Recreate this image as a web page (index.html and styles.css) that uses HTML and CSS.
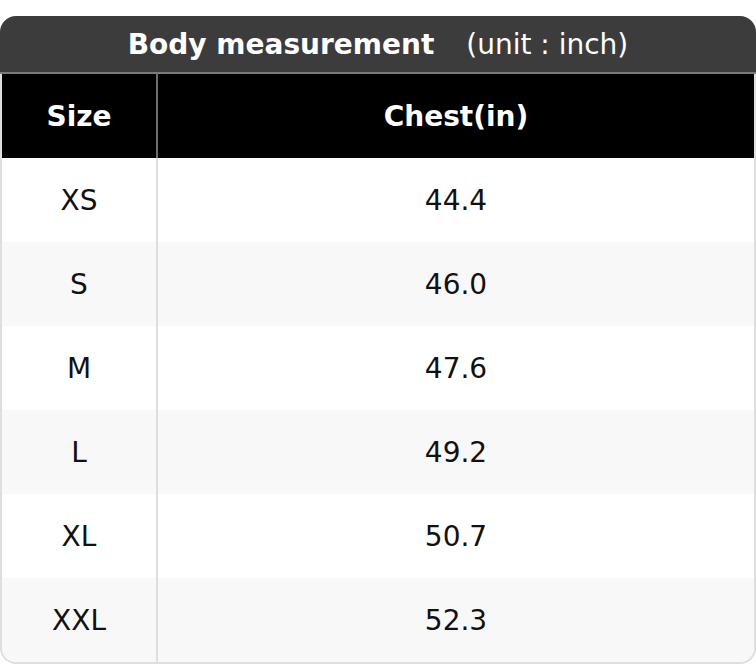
FILE: index.html
```html
<!DOCTYPE html>
<html>
<head>
<meta charset="utf-8">
<link rel="stylesheet" href="styles.css">
</head>
<body>
<div class="sheet">
  <div class="caption"><span class="title">Body measurement</span><span class="unit">(unit : inch)</span></div>
  <table class="chart">
    <thead>
      <tr><th class="c-size">Size</th><th class="c-val">Chest(in)</th></tr>
    </thead>
    <tbody>
      <tr><td>XS</td><td>44.4</td></tr>
      <tr><td>S</td><td>46.0</td></tr>
      <tr><td>M</td><td>47.6</td></tr>
      <tr><td>L</td><td>49.2</td></tr>
      <tr><td>XL</td><td>50.7</td></tr>
      <tr><td>XXL</td><td>52.3</td></tr>
    </tbody>
  </table>
</div>
</body>
</html>
```
FILE: styles.css
```css
html, body {
  margin: 0;
  padding: 0;
  background: #ffffff;
}
body {
  padding-top: 16px;
  font-family: "DejaVu Sans", sans-serif;
}
.sheet {
  width: 756px;
}
.caption {
  height: 56px;
  background: #3c3c3c;
  border-radius: 16px 16px 0 0;
  color: #ffffff;
  font-size: 28px;
  display: flex;
  align-items: center;
  justify-content: center;
  border-bottom: 2px solid #7a7a7a;
}
.title {
  font-weight: bold;
}
.unit {
  margin-left: 32px;
}
.chart {
  width: 756px;
  border-collapse: separate;
  border-spacing: 0;
  border: 2px solid #dedede;
  border-top: none;
  border-radius: 0 0 16px 16px;
  font-size: 28px;
  table-layout: fixed;
}
.chart th {
  background: #000000;
  color: #ffffff;
  font-weight: bold;
  height: 84px;
  padding: 0;
  text-align: center;
}
.c-size {
  width: 154px;
  border-right: 2px solid #6e6e6e;
}
.chart td {
  height: 84px;
  padding: 0;
  text-align: center;
  color: #111111;
}
.chart td:first-child {
  border-right: 2px solid #dedede;
}
.chart tbody tr:nth-child(even) td {
  background: #f8f8f8;
}
.chart tbody tr:last-child td:first-child {
  border-bottom-left-radius: 14px;
}
.chart tbody tr:last-child td:last-child {
  border-bottom-right-radius: 14px;
}
```
